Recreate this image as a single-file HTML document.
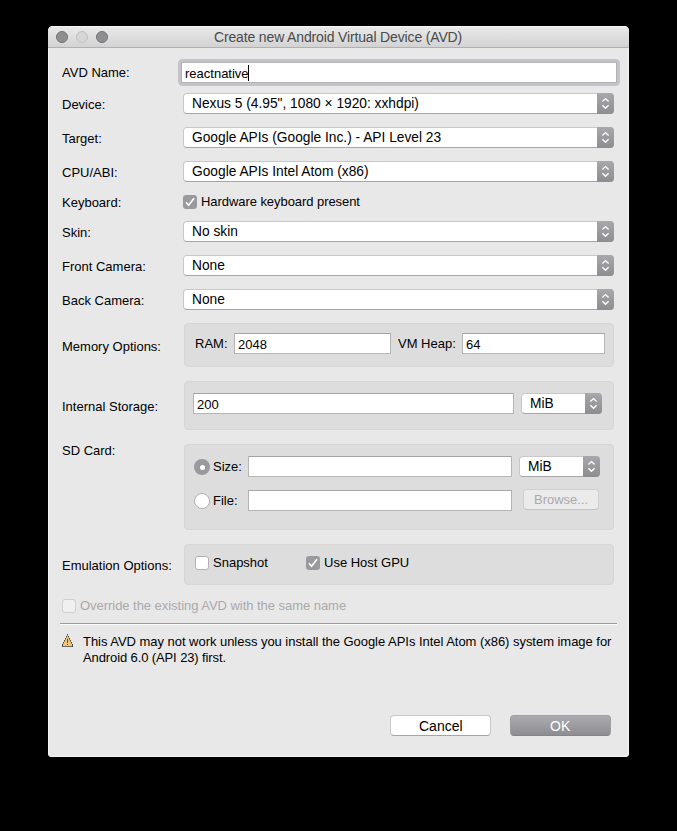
<!DOCTYPE html>
<html><head><meta charset="utf-8">
<style>
html,body{margin:0;padding:0;width:677px;height:831px;background:#000;overflow:hidden}
body{position:relative;font-family:"Liberation Sans",sans-serif;font-size:13px;color:#000}
.a{position:absolute}
#win{position:absolute;left:48px;top:26px;width:581px;height:731px;background:#e8e8e8;border-radius:5px 5px 4px 4px;box-shadow:inset 0 0 0 1px #f4f4f4}
#tb{position:absolute;left:48px;top:26px;width:581px;height:21px;border-radius:5px 5px 0 0;background:linear-gradient(#f6f6f6 0,#f6f6f6 1px,#e9e9e9 1px,#d3d3d3 100%);border-bottom:1px solid #b0b0b0}
.tl{position:absolute;top:31px;width:10px;height:10px;border-radius:50%;background:#8f8f92;border:1px solid #737376}
.tl.m{background:#d6d6d6;border-color:#c1c1c1}
#title{position:absolute;left:214px;top:30px;line-height:15px;font-size:14px;letter-spacing:-0.15px;color:#4a4a4a;white-space:nowrap}
.lbl{position:absolute;left:62px;line-height:15px;white-space:nowrap}
.pop{position:absolute;left:183px;width:431px;height:21px;box-sizing:border-box;border-radius:4px;background:#fff;border:1px solid #c8c8c8;border-bottom-color:#a6a6a6}
.pop .t{position:absolute;left:8px;top:2px;line-height:15px;font-size:13.75px;white-space:nowrap}
.pop .ar{position:absolute;right:-1px;top:-1px;width:17px;height:21px;border-radius:0 4px 4px 0;background:linear-gradient(#a8a7ac,#8d8c91)}
.pop .ar svg{position:absolute;left:0;top:0}
.tf{position:absolute;background:#fff;box-sizing:border-box;border:1px solid #b5b5b5;border-top-color:#a5a5a5}
.tf .t{position:absolute;left:3px;top:3px;line-height:15px;white-space:nowrap}
.grp{position:absolute;left:184px;width:430px;box-sizing:border-box;background:#dddddd;border:1px solid #d6d6d6;border-radius:4px}
.cb{position:absolute;width:14px;height:14px;box-sizing:border-box;border-radius:3px}
.cb.on{background:#9a999e}
.cb.off{background:#fff;border:1px solid #b2b2b2}
.cbt{position:absolute;line-height:15px;white-space:nowrap}
</style></head><body>
<div id="win"></div>
<div id="tb"></div>
<div class="tl" style="left:56px"></div>
<div class="tl m" style="left:76px"></div>
<div class="tl" style="left:96px"></div>
<div id="title">Create new Android Virtual Device (AVD)</div>

<div class="lbl" style="top:65px">AVD Name:</div>
<div class="lbl" style="top:97px">Device:</div>
<div class="lbl" style="top:131px">Target:</div>
<div class="lbl" style="top:165px">CPU/ABI:</div>
<div class="lbl" style="top:195px">Keyboard:</div>
<div class="lbl" style="top:225px">Skin:</div>
<div class="lbl" style="top:259px">Front Camera:</div>
<div class="lbl" style="top:293px">Back Camera:</div>
<div class="lbl" style="top:339px">Memory Options:</div>
<div class="lbl" style="top:399px">Internal Storage:</div>
<div class="lbl" style="top:443px">SD Card:</div>
<div class="lbl" style="top:558px">Emulation Options:</div>

<!-- AVD name field -->
<div class="a" style="left:178px;top:59px;width:442px;height:27px;border-radius:4.5px;background:#c4c3c7"></div>
<div class="a" style="left:181px;top:62px;width:436px;height:21px;background:#fff;box-sizing:border-box;border:1px solid #b2b1b5"></div>
<div class="a" style="left:185px;top:66px;line-height:15px">reactnative</div>
<div class="a" style="left:248px;top:65px;width:1px;height:16px;background:#000"></div>

<div class="pop" style="top:93px"><div class="t">Nexus 5 (4.95", 1080 × 1920: xxhdpi)</div><div class="ar"><svg width="17" height="21"><path d="M5.4 8.4L8.5 5.6L11.6 8.4M5.4 12.2L8.5 15.2L11.6 12.2" fill="none" stroke="#fff" stroke-width="1.4"/></svg></div></div>
<div class="pop" style="top:127px"><div class="t">Google APIs (Google Inc.) - API Level 23</div><div class="ar"><svg width="17" height="21"><path d="M5.4 8.4L8.5 5.6L11.6 8.4M5.4 12.2L8.5 15.2L11.6 12.2" fill="none" stroke="#fff" stroke-width="1.4"/></svg></div></div>
<div class="pop" style="top:161px"><div class="t">Google APIs Intel Atom (x86)</div><div class="ar"><svg width="17" height="21"><path d="M5.4 8.4L8.5 5.6L11.6 8.4M5.4 12.2L8.5 15.2L11.6 12.2" fill="none" stroke="#fff" stroke-width="1.4"/></svg></div></div>

<div class="cb on" style="left:183px;top:195px"><svg width="14" height="14" style="position:absolute;left:0;top:0"><path d="M3 7.3L5.6 10.3L11 3.2" fill="none" stroke="#fff" stroke-width="1.6"/></svg></div>
<div class="cbt" style="left:201px;top:194px;letter-spacing:-0.06px">Hardware keyboard present</div>

<div class="pop" style="top:221px"><div class="t">No skin</div><div class="ar"><svg width="17" height="21"><path d="M5.4 8.4L8.5 5.6L11.6 8.4M5.4 12.2L8.5 15.2L11.6 12.2" fill="none" stroke="#fff" stroke-width="1.4"/></svg></div></div>
<div class="pop" style="top:255px"><div class="t">None</div><div class="ar"><svg width="17" height="21"><path d="M5.4 8.4L8.5 5.6L11.6 8.4M5.4 12.2L8.5 15.2L11.6 12.2" fill="none" stroke="#fff" stroke-width="1.4"/></svg></div></div>
<div class="pop" style="top:289px"><div class="t">None</div><div class="ar"><svg width="17" height="21"><path d="M5.4 8.4L8.5 5.6L11.6 8.4M5.4 12.2L8.5 15.2L11.6 12.2" fill="none" stroke="#fff" stroke-width="1.4"/></svg></div></div>

<!-- Memory group -->
<div class="grp" style="top:323px;height:44px"></div>
<div class="cbt" style="left:195px;top:336px">RAM:</div>
<div class="tf" style="left:234px;top:333px;width:157px;height:21px"><div class="t">2048</div></div>
<div class="cbt" style="left:398px;top:336px">VM Heap:</div>
<div class="tf" style="left:462px;top:333px;width:143px;height:21px"><div class="t">64</div></div>

<!-- Internal storage group -->
<div class="grp" style="top:381px;height:49px"></div>
<div class="tf" style="left:193px;top:393px;width:321px;height:21px"><div class="t">200</div></div>
<div class="pop" style="left:521px;top:393px;width:81px"><div class="t">MiB</div><div class="ar"><svg width="17" height="21"><path d="M5.4 8.4L8.5 5.6L11.6 8.4M5.4 12.2L8.5 15.2L11.6 12.2" fill="none" stroke="#fff" stroke-width="1.4"/></svg></div></div>

<!-- SD card group -->
<div class="grp" style="top:444px;height:86px"></div>
<div class="a" style="left:194px;top:459px;width:16px;height:16px;border-radius:50%;background:#9a999e"></div>
<div class="a" style="left:199.5px;top:464.5px;width:5px;height:5px;border-radius:50%;background:#fff"></div>
<div class="cbt" style="left:213px;top:459px">Size:</div>
<div class="a" style="left:194px;top:493px;width:16px;height:16px;box-sizing:border-box;border-radius:50%;background:#fff;border:1px solid #b0b0b0"></div>
<div class="cbt" style="left:213px;top:493px">File:</div>
<div class="tf" style="left:248px;top:456px;width:264px;height:21px"></div>
<div class="tf" style="left:248px;top:490px;width:264px;height:21px"></div>
<div class="pop" style="left:519px;top:456px;width:81px"><div class="t">MiB</div><div class="ar"><svg width="17" height="21"><path d="M5.4 8.4L8.5 5.6L11.6 8.4M5.4 12.2L8.5 15.2L11.6 12.2" fill="none" stroke="#fff" stroke-width="1.4"/></svg></div></div>
<div class="a" style="left:523px;top:489px;width:76px;height:21px;box-sizing:border-box;border-radius:4px;background:#ebebeb;border:1px solid #d0d0d0;border-bottom-color:#c4c4c4"></div>
<div class="a" style="left:534px;top:492px;line-height:15px;color:#a9a9a9">Browse...</div>

<!-- Emulation group -->
<div class="grp" style="top:544px;height:41px"></div>
<div class="cb off" style="left:195px;top:556px"></div>
<div class="cbt" style="left:213px;top:555px">Snapshot</div>
<div class="cb on" style="left:306px;top:556px"><svg width="14" height="14" style="position:absolute;left:0;top:0"><path d="M3 7.3L5.6 10.3L11 3.2" fill="none" stroke="#fff" stroke-width="1.6"/></svg></div>
<div class="cbt" style="left:324px;top:555px">Use Host GPU</div>

<!-- override -->
<div class="cb" style="left:62px;top:599px;background:#f0f0f0;border:1px solid #cfcfcf"></div>
<div class="cbt" style="left:80px;top:598px;color:#aaaaaa;letter-spacing:-0.04px">Override the existing AVD with the same name</div>
<div class="a" style="left:60px;top:623px;width:557px;height:1px;background:#9a9a9a"></div>
<div class="a" style="left:60px;top:624px;width:557px;height:1px;background:#fbfbfb"></div>

<!-- warning -->
<svg class="a" style="left:60px;top:632px" width="16" height="16"><rect x="7" y="3.5" width="1" height="10.5" fill="#f4c679"/><rect x="6" y="5.5" width="3" height="8.5" fill="#f4c679"/><rect x="5" y="7.5" width="5" height="6.5" fill="#f4c679"/><rect x="4" y="9.5" width="7" height="4.5" fill="#f4c679"/><rect x="3" y="11.5" width="9" height="2.5" fill="#f4c679"/><rect x="7" y="2" width="1" height="1.5" fill="#474747"/><rect x="6" y="4" width="1" height="1.5" fill="#474747"/><rect x="8" y="4" width="1" height="1.5" fill="#474747"/><rect x="5" y="6" width="1" height="1.6" fill="#474747"/><rect x="9" y="6" width="1" height="1.6" fill="#474747"/><rect x="4" y="8" width="1" height="1.6" fill="#474747"/><rect x="10" y="8" width="1" height="1.6" fill="#474747"/><rect x="3" y="10" width="1" height="1.6" fill="#474747"/><rect x="11" y="10" width="1" height="1.6" fill="#474747"/><rect x="2" y="12" width="1" height="2.8" fill="#474747"/><rect x="12" y="12" width="1" height="2.8" fill="#474747"/><rect x="2" y="14" width="11" height="0.8" fill="#474747"/><rect x="7" y="6.9" width="1" height="4" fill="#474747"/><rect x="7" y="12" width="1" height="1" fill="#474747"/></svg>
<div class="cbt" style="left:83px;top:634px;letter-spacing:-0.035px">This AVD may not work unless you install the Google APIs Intel Atom (x86) system image for</div>
<div class="cbt" style="left:83px;top:650px;letter-spacing:-0.11px">Android 6.0 (API 23) first.</div>

<!-- buttons -->
<div class="a" style="left:390px;top:715px;width:101px;height:21px;box-sizing:border-box;border-radius:4px;background:#fff;border:1px solid #c8c8c8;border-bottom-color:#a6a6a6"></div>
<div class="a" style="left:419px;top:719px;line-height:15px;font-size:14px">Cancel</div>
<div class="a" style="left:510px;top:715px;width:101px;height:21px;box-sizing:border-box;border-radius:4px;background:linear-gradient(#abaaae,#8e8d92);border:1px solid #9f9ea3;border-bottom-color:#858489"></div>
<div class="a" style="left:550px;top:719px;line-height:15px;font-size:14px;color:#fff">OK</div>
</body></html>
